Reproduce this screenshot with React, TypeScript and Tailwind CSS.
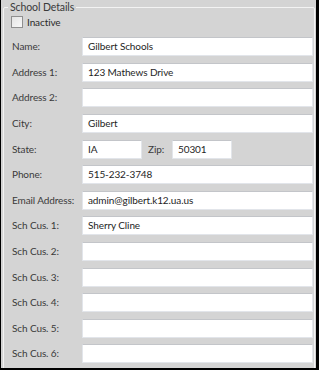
const fields: { label: string; value: string }[] = [
  { label: "Name:", value: "Gilbert Schools" },
  { label: "Address 1:", value: "123 Mathews Drive" },
  { label: "Address 2:", value: "" },
  { label: "City:", value: "Gilbert" },
];

const moreFields: { label: string; value: string }[] = [
  { label: "Phone:", value: "515-232-3748" },
  { label: "Email Address:", value: "admin@gilbert.k12.ua.us" },
  { label: "Sch Cus. 1:", value: "Sherry Cline" },
  { label: "Sch Cus. 2:", value: "" },
  { label: "Sch Cus. 3:", value: "" },
  { label: "Sch Cus. 4:", value: "" },
  { label: "Sch Cus. 5:", value: "" },
  { label: "Sch Cus. 6:", value: "" },
];

function TextBox({ value, className }: { value: string; className: string }) {
  return (
    <div
      className={`h-[19px] bg-white border border-[#e2e5ea] border-t-[#c3c5c9] pl-[5px] flex items-center text-[#1e1e1e] whitespace-nowrap overflow-hidden ${className}`}
    >
      {value}
    </div>
  );
}

function Row({ label, value }: { label: string; value: string }) {
  return (
    <div className="h-[25.6px] flex items-center">
      <span className="w-[70px] shrink-0 whitespace-nowrap text-[#3a3a3a]">{label}</span>
      <TextBox value={value} className="flex-1" />
    </div>
  );
}

export default function App() {
  return (
    <div className="w-[319px] h-[370px] overflow-hidden bg-[#d4d4d4] border-l border-r-[3px] border-b-2 border-black [font-family:Lato,sans-serif] text-[10px] tracking-[-0.1px]">
      <fieldset className="ml-[2px] mr-[1px] h-[420px] border border-[#f3f3f3] rounded-[2px]">
        <legend className="ml-[4px] px-[2px] text-[#3a3a3a] text-[10.5px] leading-[15px]">
          School Details
        </legend>
        <div className="pl-[8px] pr-[1px]">
          <label className="mt-[1px] h-[12px] flex items-center gap-[4px] -ml-[1px] text-[#2a2a2a]">
            <span className="w-[12px] h-[12px] border border-[#8f8f8f] bg-gradient-to-br from-[#e4e4e4] to-[#f8f8f8] shrink-0" />
            Inactive
          </label>
          <div className="mt-[6px] flex flex-col">
            {fields.map((f) => (
              <Row key={f.label} {...f} />
            ))}
            <div className="h-[25.6px] flex items-center">
              <span className="w-[70px] shrink-0 text-[#3a3a3a]">State:</span>
              <TextBox value="IA" className="w-[60px]" />
              <span className="ml-[6px] w-[24px] text-[#3a3a3a]">Zip:</span>
              <TextBox value="50301" className="w-[60px]" />
            </div>
            {moreFields.map((f) => (
              <Row key={f.label} {...f} />
            ))}
          </div>
        </div>
      </fieldset>
    </div>
  );
}
